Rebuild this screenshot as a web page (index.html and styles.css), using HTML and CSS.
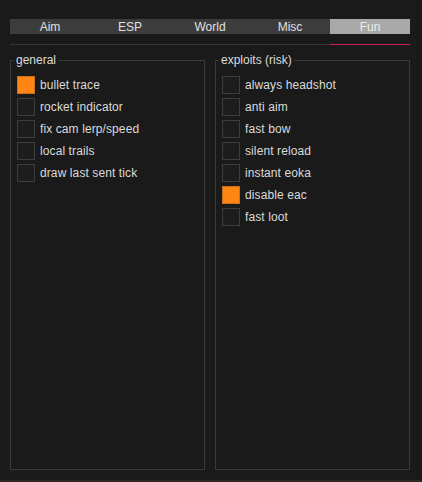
FILE: index.html
```html
<!DOCTYPE html>
<html lang="en">
<head>
    <meta charset="UTF-8">
    <meta name="viewport" content="width=device-width, initial-scale=1.0">
    <title>Menu - Fun</title>
    <link rel="stylesheet" href="styles.css">
</head>
<body>

    <div class="window">
        <div class="tabs">
            <div class="tab">Aim</div>
            <div class="tab">ESP</div>
            <div class="tab">World</div>
            <div class="tab">Misc</div>
            <div class="tab active">Fun</div>
        </div>
        <div class="divider"><span class="underline"></span></div>

        <div class="groups">
            <fieldset class="group">
                <legend>general</legend>
                <label class="option"><span class="box checked"></span>bullet trace</label>
                <label class="option"><span class="box"></span>rocket indicator</label>
                <label class="option"><span class="box"></span>fix cam lerp/speed</label>
                <label class="option"><span class="box"></span>local trails</label>
                <label class="option"><span class="box"></span>draw last sent tick</label>
            </fieldset>

            <fieldset class="group">
                <legend>exploits (risk)</legend>
                <label class="option"><span class="box"></span>always headshot</label>
                <label class="option"><span class="box"></span>anti aim</label>
                <label class="option"><span class="box"></span>fast bow</label>
                <label class="option"><span class="box"></span>silent reload</label>
                <label class="option"><span class="box"></span>instant eoka</label>
                <label class="option"><span class="box checked"></span>disable eac</label>
                <label class="option"><span class="box"></span>fast loot</label>
            </fieldset>
        </div>
    </div>

</body>
</html>
```

FILE: styles.css
```css
* { box-sizing: border-box; }
body { margin: 0; background: #2a2820; font-family: "Liberation Sans", Arial, sans-serif; font-size: 12px; color: #dadada; }
.window { height: 480px; background: #1a1a1a; padding: 19px 12px 0 10px; }

.tabs { display: flex; height: 15px; background: #3c3c3c; }
.tab { flex: 1; text-align: center; line-height: 16px; color: #e0e0e0; }
.tab.active { background: #a9a9a9; color: #ececec; }

.divider { height: 1px; margin-top: 10px; background: #363636; display: flex; justify-content: flex-end; }
.underline { width: 80px; background: #cf1d5d; }

.groups { display: flex; gap: 10px; margin-top: 8px; }
.group { flex: 1; height: 417px; margin: 0; padding: 7px 6px 0; border: 1px solid #3a3a3a; min-width: 0; }
.group legend { padding: 0 2px; margin-left: -3px; line-height: 14px; color: #dcdcdc; }

.option { display: flex; align-items: center; height: 22px; gap: 5px; letter-spacing: 0.1px; }
.box { width: 18px; height: 18px; border: 1px solid #3d3d3d; background: #1d1d1d; }
.box.checked { background: #ff8614; border-color: #c8701e; }
```
